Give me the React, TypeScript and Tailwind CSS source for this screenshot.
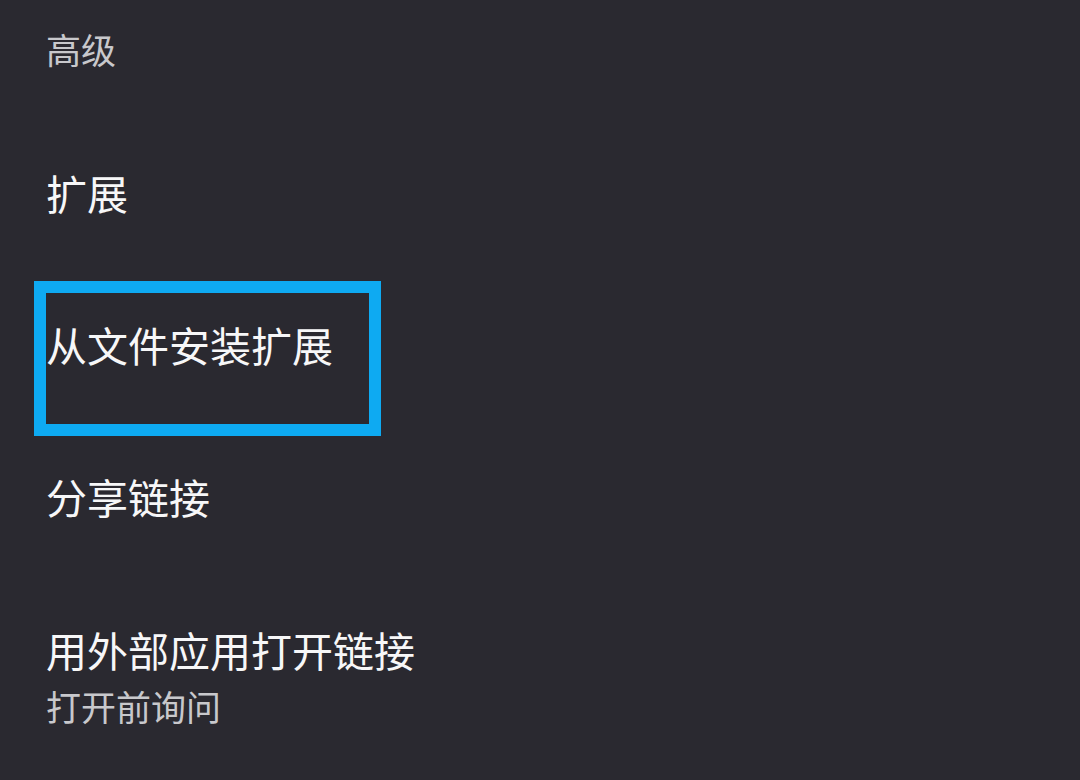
import React from "react";

const font = { fontFamily: '"Noto Sans CJK SC", "Noto Sans", sans-serif' };

export default function App() {
  return (
    <div className="w-[1080px] h-[780px] bg-[#2a2930] overflow-hidden pl-[46px]" style={font}>
      <div className="h-[96px] flex items-center text-[35px] leading-none text-[#c8c8cc]">高级</div>
      <div className="h-[20px]" />
      <div className="h-[152px] flex items-center text-[41px] leading-none text-[#f7f7f8]">扩展</div>
      <div className="relative h-[152px] flex items-center text-[41px] leading-none text-[#f7f7f8]">
        <span className="relative z-10">从文件安装扩展</span>
        <div className="absolute left-[-12px] top-[13px] w-[347px] h-[155px] border-[12px] border-[#0eaaf2]" />
      </div>
      <div className="h-[152px] flex items-center text-[41px] leading-none text-[#f7f7f8]">分享链接</div>
      <div className="pt-[49px] flex flex-col">
        <div className="h-[56px] flex items-center text-[41px] leading-none text-[#f7f7f8]">用外部应用打开链接</div>
        <div className="h-[56px] flex items-center text-[35px] leading-none text-[#c8c8cc]">打开前询问</div>
      </div>
    </div>
  );
}
